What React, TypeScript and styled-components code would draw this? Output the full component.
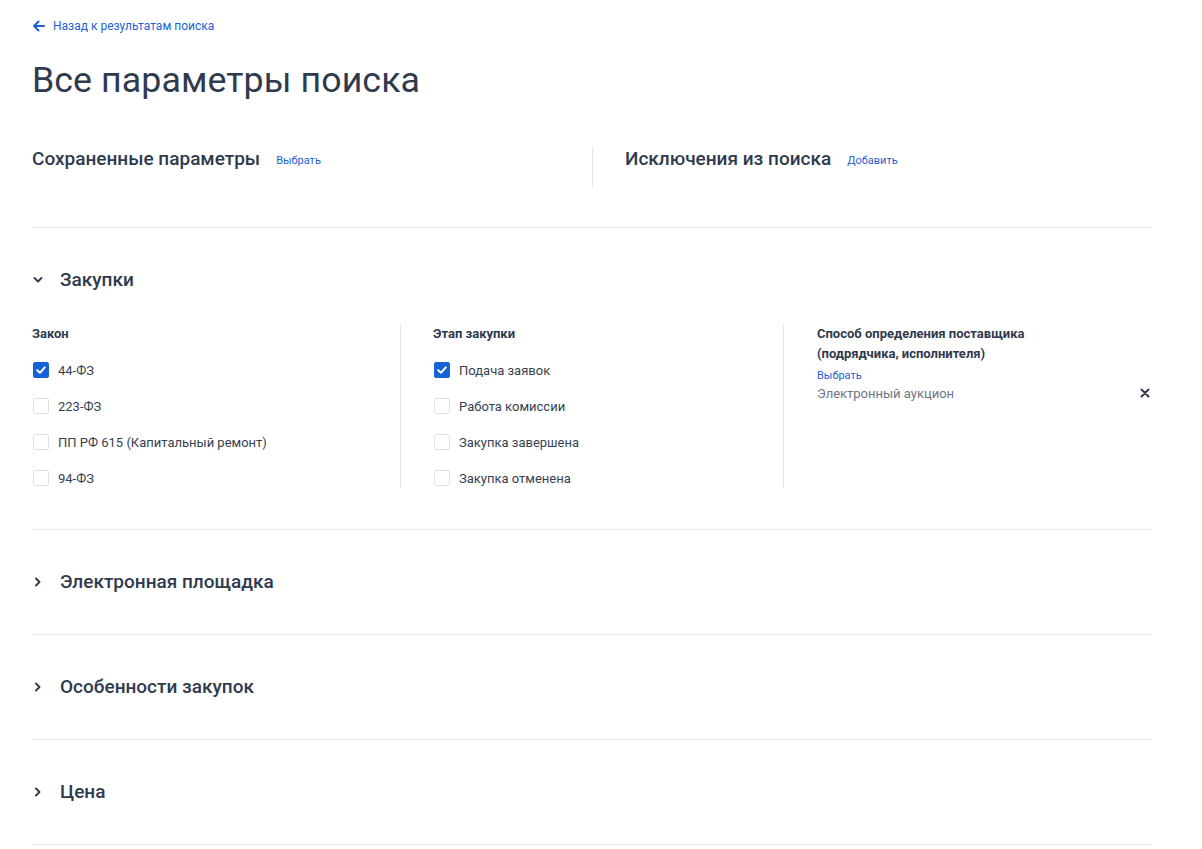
import React from "react";
import styled, { createGlobalStyle } from "styled-components";

const Global = createGlobalStyle`
  html, body { margin: 0; padding: 0; background: #fff; }
  body { font-family: Roboto, "Noto Sans", Arial, sans-serif; color: #2f3a4e; }
  * { box-sizing: border-box; }
`;

const Page = styled.div`
  width: 1120px;
  margin-left: 32px;
  padding-top: 18px;
`;

const BackLink = styled.a`
  display: flex;
  align-items: center;
  gap: 8px;
  height: 16px;
  font-size: 12px;
  color: #1d5fd1;
  text-decoration: none;
  cursor: pointer;
`;

const Title = styled.h1`
  margin: 24px 0 0;
  font-size: 35.7px;
  line-height: 44px;
  font-weight: 400;
  color: #2f3a4e;
  letter-spacing: 0.1px;
`;

const TopPanel = styled.div`
  display: grid;
  grid-template-columns: 560px 1fr;
  margin-top: 45px;
  padding-bottom: 40px;
  border-bottom: 1px solid #e3e6ea;
`;

const TopCol = styled.div<{ $divided?: boolean }>`
  display: flex;
  align-items: flex-start;
  gap: 16px;
  height: 40px;
  padding-left: ${(p) => (p.$divided ? "32px" : "0")};
  border-left: ${(p) => (p.$divided ? "1px solid #e3e6ea" : "none")};
`;

const SubHeading = styled.h2`
  margin: 0;
  font-size: 19px;
  line-height: 24px;
  font-weight: 500;
  color: #2f3a4e;
`;

const SmallLink = styled.a`
  font-size: 11px;
  line-height: 28px;
  color: #1d5fd1;
  cursor: pointer;
`;

const Section = styled.section<{ $open?: boolean }>`
  padding: 40px 0 ${(p) => (p.$open ? "41px" : "40px")};
  border-bottom: 1px solid #dfe6ee;
`;

const SectionHeader = styled.div`
  display: flex;
  align-items: center;
  gap: 16px;
  height: 24px;
  cursor: pointer;
`;

const ChevronBox = styled.span`
  display: flex;
  width: 12px;
  justify-content: center;
`;

const Columns = styled.div`
  display: grid;
  grid-template-columns: 368px 383px 1fr;
  margin-top: 32px;
`;

const Column = styled.div<{ $divided?: boolean }>`
  display: flex;
  flex-direction: column;
  gap: 16px;
  padding-left: ${(p) => (p.$divided ? "32px" : "0")};
  border-left: ${(p) => (p.$divided ? "1px solid #e3e6ea" : "none")};
`;

const MethodColumn = styled(Column)`
  gap: 0;
  padding-left: 33px;
`;

const ColTitle = styled.div`
  font-size: 13px;
  line-height: 20px;
  font-weight: 700;
  color: #2f3a4e;
`;

const CheckRow = styled.label`
  display: flex;
  align-items: center;
  gap: 10px;
  height: 20px;
  padding-left: 1px;
  font-size: 13px;
  color: #353f52;
  cursor: pointer;
`;

const Box = styled.span<{ $checked?: boolean }>`
  display: flex;
  align-items: center;
  justify-content: center;
  width: 16px;
  height: 16px;
  border-radius: 2px;
  border: 1px solid ${(p) => (p.$checked ? "#1662d6" : "#dde1e6")};
  background: ${(p) => (p.$checked ? "#1662d6" : "#fff")};
`;

const Label = styled.span`
  margin-left: -1px;
`;

const MethodLink = styled.a`
  margin-top: 4px;
  font-size: 11px;
  line-height: 16px;
  color: #1d5fd1;
  cursor: pointer;
`;

const SelectedRow = styled.div`
  display: flex;
  align-items: center;
  justify-content: space-between;
  height: 20px;
  margin-top: -1px;
  font-size: 13px;
  color: #6c7585;
`;

const RemoveBtn = styled.button`
  border: none;
  background: none;
  padding: 0;
  margin-right: 2px;
  display: flex;
  cursor: pointer;
`;

const Chevron = ({ open }: { open?: boolean }) => (
  <ChevronBox>
    <svg width="10" height="10" viewBox="0 0 10 10">
      <polyline
        points={open ? "1.5,3 5,6.5 8.5,3" : "3,1.5 6.5,5 3,8.5"}
        fill="none"
        stroke="#2f3a4e"
        strokeWidth="1.9"
        strokeLinecap="round"
        strokeLinejoin="round"
      />
    </svg>
  </ChevronBox>
);

const Check = ({ label, checked }: { label: string; checked?: boolean }) => (
  <CheckRow>
    <Box $checked={checked}>
      {checked && (
        <svg width="12" height="12" viewBox="0 0 12 12">
          <polyline points="2.2,6.3 4.9,8.8 9.8,3.4" fill="none" stroke="#fff" strokeWidth="2" strokeLinecap="round" strokeLinejoin="round" />
        </svg>
      )}
    </Box>
    <Label>{label}</Label>
  </CheckRow>
);

const Collapsed = ({ title }: { title: string }) => (
  <Section>
    <SectionHeader>
      <Chevron />
      <SubHeading>{title}</SubHeading>
    </SectionHeader>
  </Section>
);

export default function App() {
  return (
    <>
      <Global />
      <Page>
        <BackLink>
          <svg width="13" height="12" viewBox="0 0 13 12">
            <path d="M12 6H2M6.5 1.5L2 6l4.5 4.5" fill="none" stroke="#1d5fd1" strokeWidth="2" strokeLinecap="round" strokeLinejoin="round" />
          </svg>
          Назад к результатам поиска
        </BackLink>
        <Title>Все параметры поиска</Title>
        <TopPanel>
          <TopCol>
            <SubHeading>Сохраненные параметры</SubHeading>
            <SmallLink>Выбрать</SmallLink>
          </TopCol>
          <TopCol $divided>
            <SubHeading>Исключения из поиска</SubHeading>
            <SmallLink>Добавить</SmallLink>
          </TopCol>
        </TopPanel>
        <Section $open>
          <SectionHeader>
            <Chevron open />
            <SubHeading>Закупки</SubHeading>
          </SectionHeader>
          <Columns>
            <Column>
              <ColTitle>Закон</ColTitle>
              <Check label="44-ФЗ" checked />
              <Check label="223-ФЗ" />
              <Check label="ПП РФ 615 (Капитальный ремонт)" />
              <Check label="94-ФЗ" />
            </Column>
            <Column $divided>
              <ColTitle>Этап закупки</ColTitle>
              <Check label="Подача заявок" checked />
              <Check label="Работа комиссии" />
              <Check label="Закупка завершена" />
              <Check label="Закупка отменена" />
            </Column>
            <MethodColumn $divided>
              <ColTitle>
                Способ определения поставщика
                <br />
                (подрядчика, исполнителя)
              </ColTitle>
              <MethodLink>Выбрать</MethodLink>
              <SelectedRow>
                Электронный аукцион
                <RemoveBtn aria-label="Удалить">
                  <svg width="10" height="10" viewBox="0 0 10 10">
                    <path d="M1.5 1.5l7 7M8.5 1.5l-7 7" stroke="#2f3a4e" strokeWidth="2" strokeLinecap="round" />
                  </svg>
                </RemoveBtn>
              </SelectedRow>
            </MethodColumn>
          </Columns>
        </Section>
        <Collapsed title="Электронная площадка" />
        <Collapsed title="Особенности закупок" />
        <Collapsed title="Цена" />
      </Page>
    </>
  );
}
